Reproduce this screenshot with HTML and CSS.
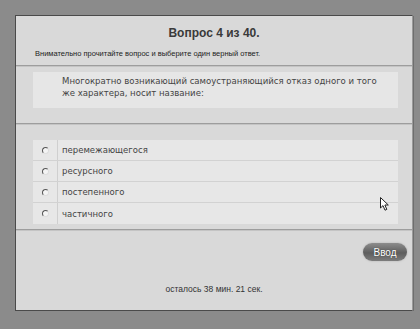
FILE: index.html
```html
<!DOCTYPE html>
<html>
<head>
    <link rel="stylesheet" href="styles.css">
</head>
<body>
    <div class="panel">
        <h1 class="title">Вопрос 4 из 40.</h1>
        <p class="hint">Внимательно прочитайте вопрос и выберите один верный ответ.</p>
        <hr class="rule">
        <div class="question">Многократно возникающий самоустраняющийся отказ одного и того же характера, носит название:</div>
        <hr class="rule rule-mid">
        <div class="answers">
            <label class="answer"><span class="mark"><span class="radio"></span></span><span class="text">перемежающегося</span></label>
            <label class="answer"><span class="mark"><span class="radio"></span></span><span class="text">ресурсного</span></label>
            <label class="answer"><span class="mark"><span class="radio"></span></span><span class="text">постепенного</span></label>
            <label class="answer"><span class="mark"><span class="radio"></span></span><span class="text">частичного</span></label>
        </div>
        <hr class="rule rule-low">
        <div class="actions">
            <button class="btn">Ввод</button>
        </div>
        <p class="timer">осталось 38 мин. 21 сек.</p>
        <svg class="cursor" width="10" height="15" viewBox="0 0 10 15">
            <path d="M0.5 0.5 L0.5 11 L3 8.6 L5 13.2 L6.8 12.4 L4.9 8 L8.3 8 Z" fill="#fff" stroke="#222" stroke-width="1"/>
        </svg>
    </div>
</body>
</html>
```

FILE: styles.css
```css
body {
    margin: 0; background-color: #8b8b8b;
    font-family: "DejaVu Sans", Verdana, sans-serif;
}
.panel {
    position: relative;
    margin: 15px 0 0 15px; width: 396px; height: 294px;
    background-color: #d9d9d9;
    border: 1px solid #4a4a4a; border-right-color: #9a9a9a;
    box-shadow: 1px 1px 0 #6e6e6e;
}
.title {
    margin: 10px 0 0; text-align: center;
    font: bold 12px "Liberation Sans", Arial, sans-serif; color: #3a3a3a;
    line-height: 15px;
}
.hint {
    margin: 8px 0 0 19px;
    font: 7.5px "Liberation Sans", Arial, sans-serif; color: #222;
    line-height: 10px;
}
.rule {
    margin: 6px 0 0; border: 0; height: 1px;
    background-color: #9d9d9d; border-bottom: 1px solid #c4c4c4;
}
.question {
    margin: 5px 14px 0 17px; height: 36px; box-sizing: border-box;
    padding: 3px 8px 0 29px;
    background-color: #e6e6e6; color: #444;
    font-family: "DejaVu Sans Condensed", "DejaVu Sans", sans-serif;
    font-size: 9.5px; line-height: 12px;
}
.rule-mid { margin-top: 15px; }
.answers {
    margin: 15px 14px 0 17px;
    background-color: #e7e7e7;
}
.answer {
    display: flex; height: 21px; align-items: stretch;
    border-bottom: 1px solid #d2d2d2; box-sizing: border-box;
    color: #444; font-size: 8.5px;
}
.answer:last-child { border-bottom: 0; }
.mark {
    width: 24px; display: flex; align-items: center; justify-content: center;
    border-right: 1px solid #cfcfcf;
}
.radio {
    width: 5px; height: 5px; border-radius: 50%;
    border: 1px solid #555; border-right-color: #ddd; border-bottom-color: #ddd;
    background-color: #f4f4f4;
}
.text { display: flex; align-items: center; padding-left: 4px; }
.rule-low { margin-top: 5px; }
.actions { display: flex; justify-content: flex-end; padding: 12px 5px 0 0; }
.btn {
    width: 44px; height: 18px; border-radius: 9px; border: 0; padding: 0;
    background: linear-gradient(#8d8d8d, #5e5e5e 55%, #7c7c7c);
    box-shadow: 0 0 2px #aaa;
    color: #fff; font: 10px "Liberation Sans", Arial, sans-serif;
    text-shadow: 0 0 1px #333;
}
.timer {
    margin: 23px 0 0; text-align: center;
    font: 8.5px "Liberation Sans", Arial, sans-serif; color: #333;
}
.cursor { position: absolute; left: 364px; top: 181px; }
```
